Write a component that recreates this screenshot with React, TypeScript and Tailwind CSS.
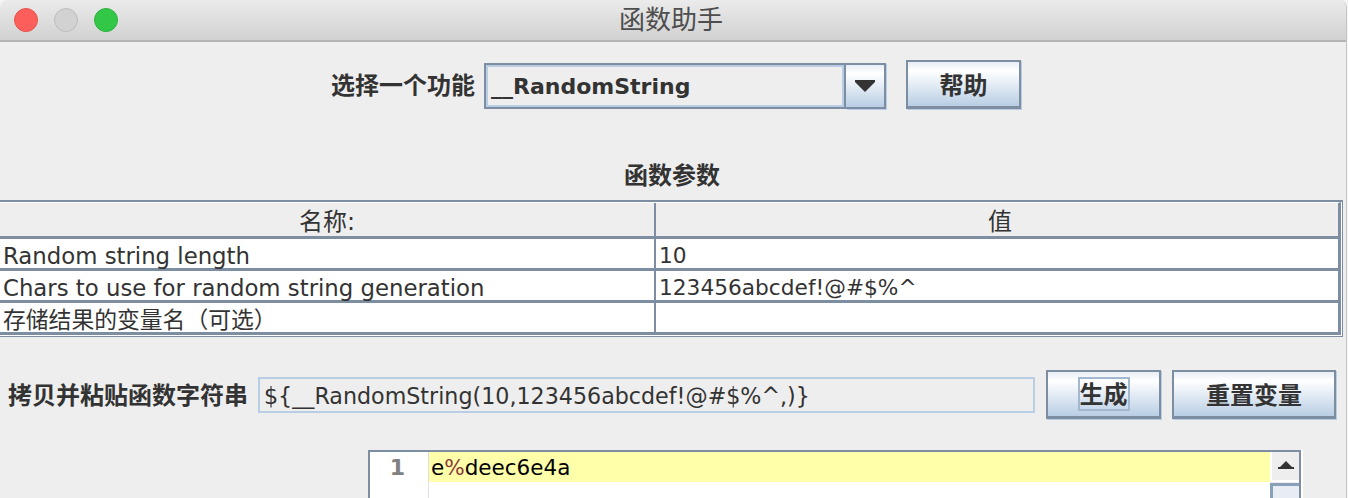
const FONT = "font-['DejaVu_Sans','Noto_Sans_CJK_SC',sans-serif]"

function Button({ label, width, focused }: { label: string; width: string; focused?: boolean }) {
  return (
    <div
      className={`${width} h-[49px] flex items-center justify-center border-2 border-[#7d8ea3] border-b-[3px] shadow-[1px_1px_0_#b9cee4] bg-gradient-to-b from-[#e8eef5] via-[#ffffff] via-20% to-[#b9cee4] text-[24px] font-bold text-[#333333]`}
    >
      {focused ? (
        <span className="h-[34px] border-2 border-[#a3b8cf] pt-[1px] leading-[30px]">{label}</span>
      ) : (
        <span className="pt-[3px] leading-none">{label}</span>
      )}
    </div>
  )
}

function Row({ name, value }: { name: string; value: string }) {
  return (
    <div className="flex h-8 border-b-[3px] border-r-[3px] border-[#7d8ea3] bg-white text-[22.8px] leading-[34px] text-[#333333]">
      <div className="w-[656px] pl-[3px] border-r-2 border-[#7d8ea3] whitespace-nowrap">{name}</div>
      <div className="flex-1 pl-[3px] text-[21.7px] whitespace-nowrap">{value}</div>
    </div>
  )
}

export default function App() {
  return (
    <div className="w-[1348px] h-[498px] bg-[#f4f4f4]">
      <div className={`${FONT} w-[1347px] h-[498px] overflow-hidden rounded-t-lg bg-[#eeeeee] flex flex-col border-r border-[#c4c4c4]`}>
        {/* title bar */}
        <div className="relative h-[42px] shrink-0 flex items-center gap-4 pl-[14px] border-b-2 border-[#b4b4b4] bg-gradient-to-b from-[#ebebeb] to-[#d1d1d1]">
          <span className="w-6 h-6 rounded-full bg-[#fc5f5b] border border-[#e9524e]" />
          <span className="w-6 h-6 rounded-full bg-[#d2d2d2] border border-[#bcbcbc]" />
          <span className="w-6 h-6 rounded-full bg-[#33c748] border border-[#2bb13d]" />
          <div className="absolute inset-x-0 top-0 h-[40px] flex items-center justify-center pr-[4px] text-[26px] text-[#4d4d4d]">
            函数助手
          </div>
        </div>

        {/* function picker */}
        <div className="flex items-start pt-[18px] pl-[331px]">
          <span className="w-[153px] mt-[11px] text-[24px] leading-[30px] font-bold text-[#333333]">选择一个功能</span>
          <div className="mt-[3px] flex h-[46px]">
            <div className="w-[362px] border-2 border-b-[3px] border-[#7d8ea3] bg-[#eeeeee] outline-2 -outline-offset-4 outline-[#b9cee4] pl-[5px] text-[22px] leading-[43px] font-bold text-[#333333]">
              __RandomString
            </div>
            <div className="w-[40px] flex items-center justify-center border-2 border-l-0 border-[#7d8ea3] shadow-[1px_1px_0_#b9cee4] bg-gradient-to-b from-[#e8eef5] via-[#ffffff] via-20% to-[#b9cee4]">
              <svg width="20" height="12" viewBox="0 0 20 12">
                <path d="M0 0h20v2l-10 10L0 2z" fill="#333333" />
              </svg>
            </div>
          </div>
          <div className="ml-[20px]">
            <Button label="帮助" width="w-[115px]" />
          </div>
        </div>

        <div className="mt-[52px] text-center text-[24px] leading-[30px] font-bold text-[#333333] pr-[2px]">函数参数</div>

        {/* parameters table */}
        <div className="mt-[9px] w-[1343px] border-t-2 border-r border-b border-[#7d8ea3] pr-[1px] pb-[1px] bg-white">
          <div className="flex h-[37px] border-t border-b-[3px] border-r-[3px] border-t-white border-b-[#7d8ea3] border-r-[#7d8ea3] text-[24px] leading-[38px] text-[#333333] bg-[#eeeeee]">
            <div className="w-[656px] border-r-2 border-[#7d8ea3] text-center">名称:</div>
            <div className="flex-1 pl-[6px] text-center">值</div>
          </div>
          <Row name="Random string length" value="10" />
          <Row name="Chars to use for random string generation" value="123456abcdef!@#$%^" />
          <Row name="存储结果的变量名（可选）" value="" />
        </div>

        {/* generated string */}
        <div className="mt-[33px] flex items-center pl-[8px] w-[1336px]">
          <span className="w-[250px] shrink-0 mt-[3px] text-[24px] font-bold text-[#333333] whitespace-nowrap">拷贝并粘贴函数字符串</span>
          <div className="w-[777px] h-[36px] shrink-0 border-2 border-[#b9cee4] pl-[4px] text-[22.2px] leading-[35px] text-[#333333] whitespace-nowrap">
            {'${__RandomString(10,123456abcdef!@#$%^,)}'}
          </div>
          <div className="ml-[11px]">
            <Button label="生成" width="w-[115px]" focused />
          </div>
          <div className="ml-[11px]">
            <Button label="重置变量" width="w-[164px]" />
          </div>
        </div>

        {/* result editor */}
        <div className="mt-[31px] ml-[368px] w-[933px] flex-1 flex border-l-2 border-t-2 border-r-2 border-[#7d8ea3] shadow-[2px_0_0_#ffffff] bg-white">
          <div className="w-[59px] border-r border-[#e0e0e0] text-center pr-[3px] text-[22px] font-bold leading-[31px] text-[#808080]">1</div>
          <div className="flex-1">
            <div className="h-[30px] pl-[2px] bg-[#ffffaa] text-[21.5px] leading-[32px] text-black">
              e<span className="text-[#8a3a3a]">%</span>deec6e4a
            </div>
          </div>
          {/* scrollbar */}
          <div className="w-[29px] flex flex-col bg-[#eeeeee]">
            <div className="h-[30px] shrink-0 flex items-center justify-center pb-[3px] border-l-2 border-b-2 border-white">
              <svg width="16" height="8" viewBox="0 0 16 8">
                <path d="M8 0l6 6h2v2H0V6h2z" fill="#333333" />
              </svg>
            </div>
            <div className="mt-[1px] flex-1 border-t-[3px] border-l-[3px] border-[#8a9fb8] bg-[#e8edf3]" />
          </div>
        </div>
      </div>
    </div>
  )
}
